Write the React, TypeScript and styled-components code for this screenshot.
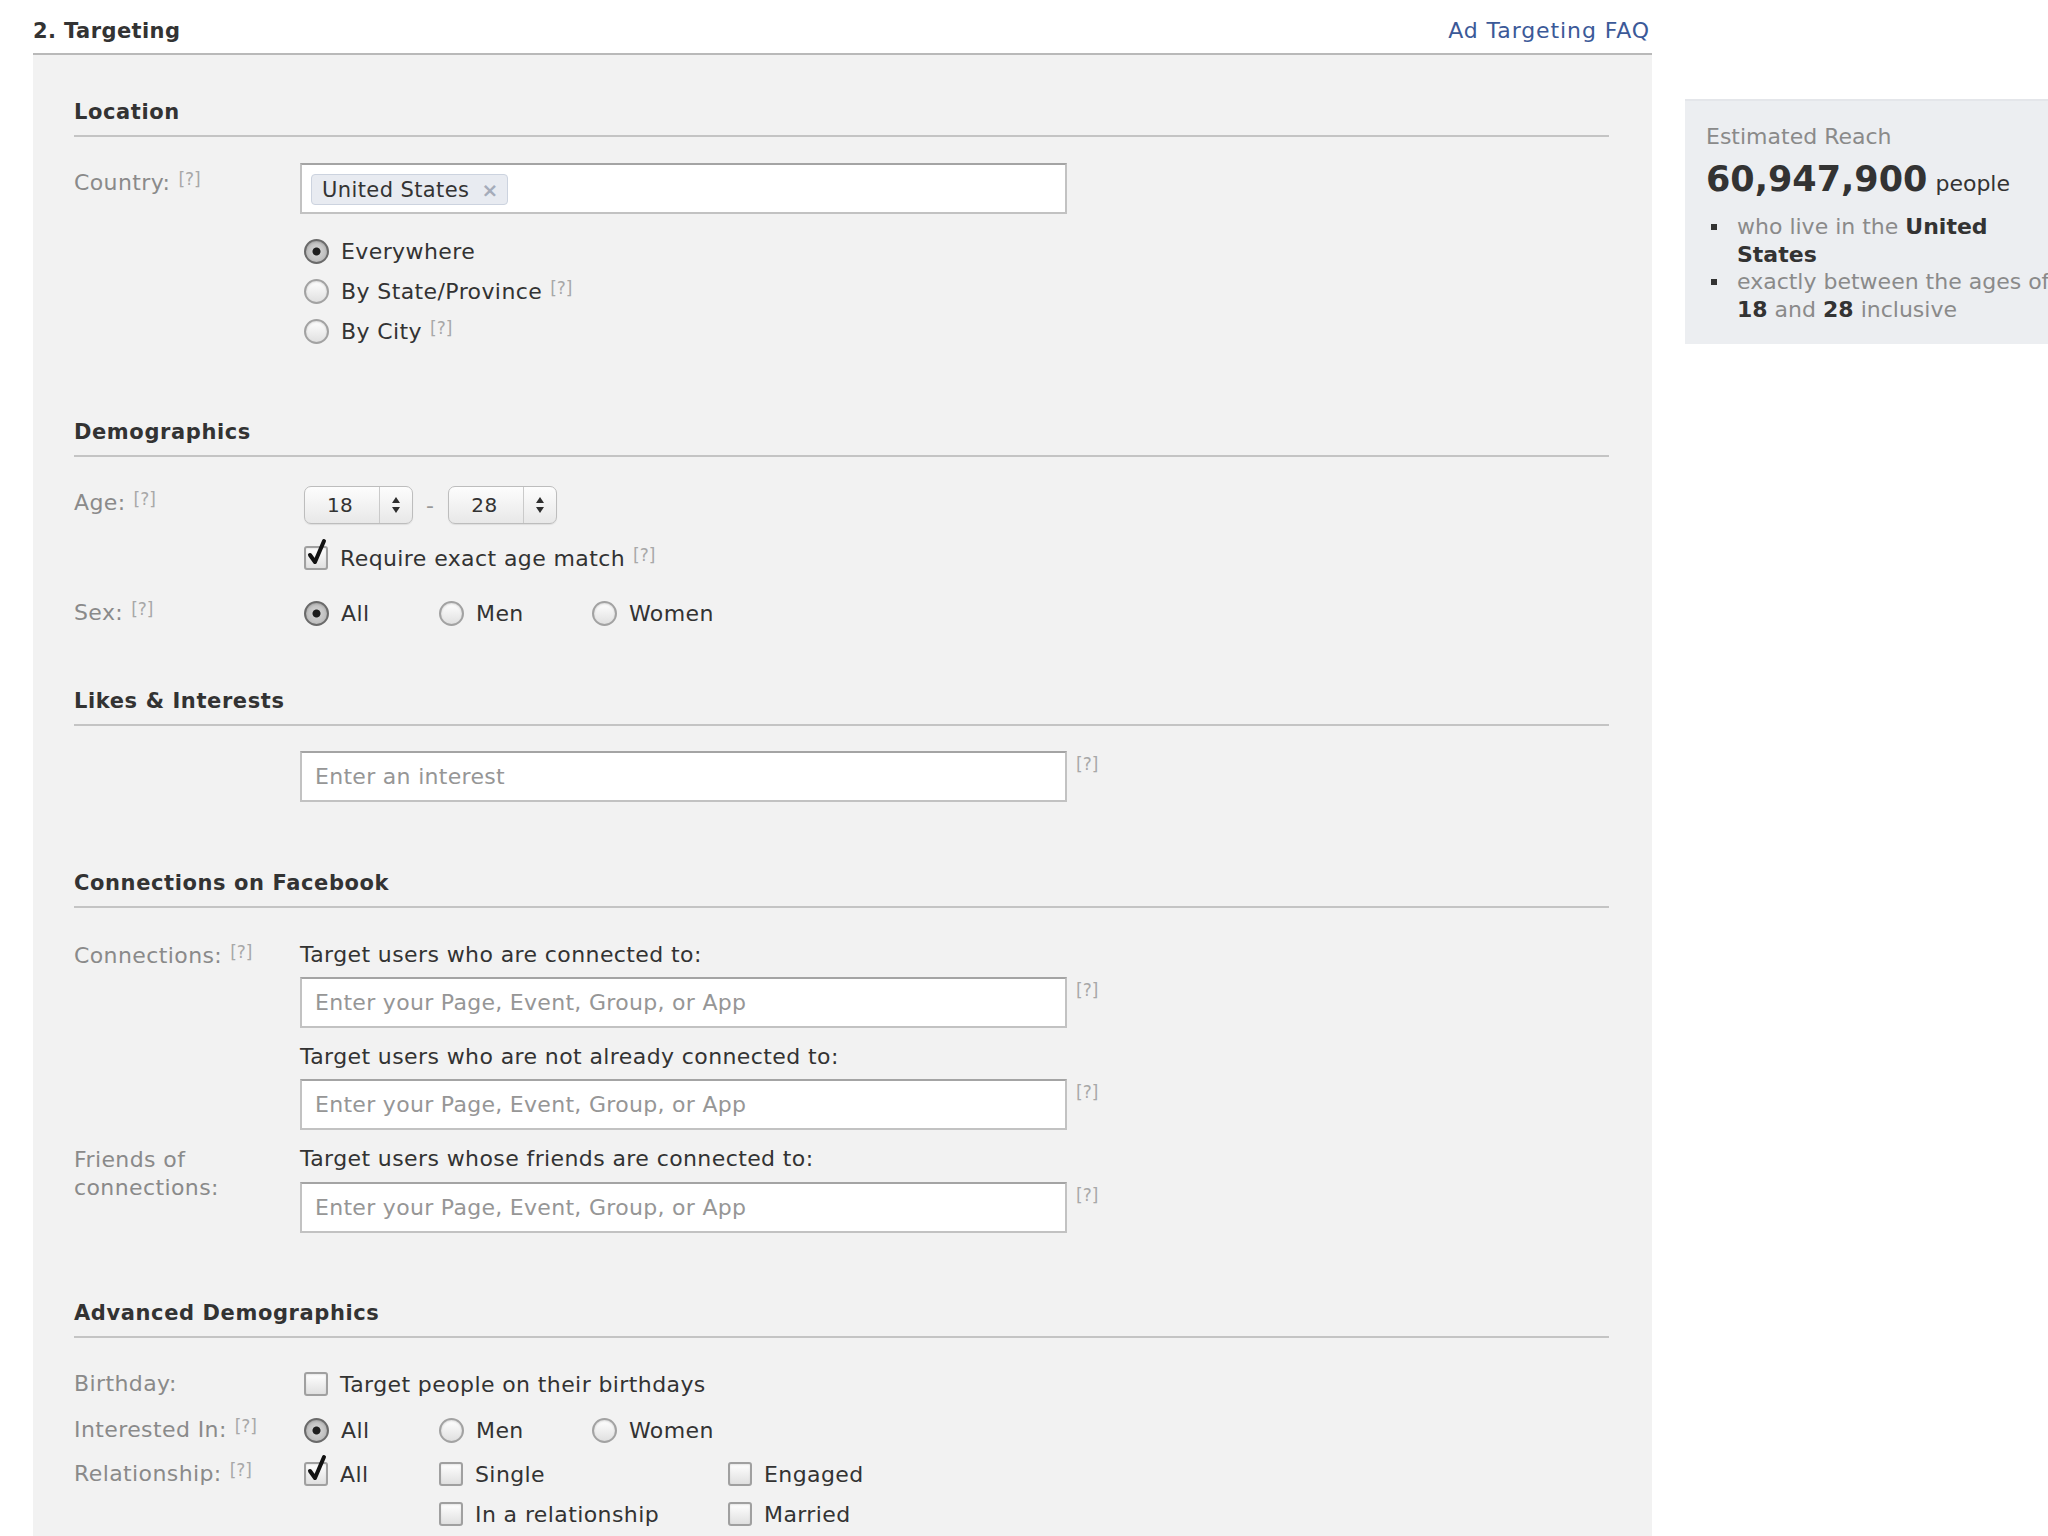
import React, { FC } from "react";
import styled, { createGlobalStyle } from "styled-components";

const GlobalStyle = createGlobalStyle`
  html, body {
    margin: 0;
    padding: 0;
    background: #ffffff;
    overflow: hidden;
  }
  body {
    font-family: "DejaVu Sans", Verdana, sans-serif;
    font-size: 22px;
    color: #333333;
  }
`;

const Page = styled.div`
  display: flex;
  align-items: flex-start;
  gap: 33px;
  padding-left: 33px;
  width: 2200px;
`;

const Main = styled.div`
  width: 1619px;
  flex-shrink: 0;
`;

const TitleBar = styled.div`
  display: flex;
  justify-content: space-between;
  align-items: center;
  height: 55px;
  box-sizing: border-box;
  padding-top: 8px;
  border-bottom: 2px solid #b9b9b9;
`;

const Title = styled.h2`
  margin: 0;
  font-size: 21px;
  font-weight: bold;
  letter-spacing: 0.4px;
  color: #333333;
`;

const FaqLink = styled.a`
  color: #3b5998;
  font-size: 22px;
  letter-spacing: 0.9px;
  text-decoration: none;
  padding-right: 2px;
`;

const Panel = styled.div`
  background: #f2f2f2;
  padding: 44px 43px 40px 41px;
  min-height: 1500px;
  letter-spacing: 0.4px;
`;

const Section = styled.section<{ $mt?: number }>`
  margin-top: ${(p) => p.$mt ?? 0}px;
`;

const SectionHeader = styled.h3`
  margin: 0;
  font-size: 21px;
  font-weight: bold;
  line-height: 26px;
  letter-spacing: 0.6px;
  color: #333333;
  padding-bottom: 10px;
  border-bottom: 2px solid #c4c4c4;
`;

const Row = styled.div<{ $mt?: number }>`
  display: grid;
  grid-template-columns: 226px 1fr;
  margin-top: ${(p) => p.$mt ?? 0}px;
`;

const Label = styled.div<{ $pt?: number }>`
  color: #8a8a8a;
  line-height: 28px;
  padding-top: ${(p) => p.$pt ?? 0}px;
`;

const Help = styled.span`
  position: relative;
  top: -5px;
  font-size: 17px;
  letter-spacing: 0;
  color: #a8a8a8;
  margin-left: 8px;
`;

const SideHelp = styled.span`
  font-size: 17px;
  letter-spacing: 0;
  color: #a8a8a8;
  margin-left: 9px;
  line-height: 26px;
`;

const Field = styled.div`
  display: flex;
  flex-direction: column;
`;

const InputLine = styled.div<{ $mt?: number }>`
  display: flex;
  align-items: flex-start;
  margin-top: ${(p) => p.$mt ?? 0}px;
`;

const TextBox = styled.input`
  width: 767px;
  height: 51px;
  box-sizing: border-box;
  border: 2px solid #c2c2c2;
  border-top-color: #a4a4a4;
  background: #ffffff;
  padding: 0 13px;
  font-family: inherit;
  font-size: 22px;
  letter-spacing: 0.3px;
  color: #333333;
  outline: none;
  &::placeholder {
    color: #969696;
  }
`;

const TokenBox = styled.div`
  width: 767px;
  height: 51px;
  box-sizing: border-box;
  border: 2px solid #c2c2c2;
  border-top-color: #a4a4a4;
  background: #ffffff;
  padding: 9px 0 0 9px;
`;

const Token = styled.span`
  display: inline-flex;
  align-items: center;
  gap: 12px;
  height: 31px;
  box-sizing: border-box;
  padding: 0 8px 0 10px;
  background: #e8ebf1;
  border: 1px solid #ccd3df;
  border-radius: 4px;
  font-size: 21px;
  color: #333333;
`;

const TokenClose = styled.span`
  color: #a5acba;
  font-size: 20px;
  font-weight: bold;
`;

const Caption = styled.div<{ $mt?: number }>`
  line-height: 26px;
  color: #333333;
  margin-top: ${(p) => p.$mt ?? 0}px;
`;

const OptionList = styled.div<{ $mt?: number }>`
  display: flex;
  flex-direction: column;
  margin-left: 4px;
  margin-top: ${(p) => p.$mt ?? 0}px;
`;

const OptionGrid = styled.div<{ $cols: string }>`
  display: grid;
  grid-template-columns: ${(p) => p.$cols};
  grid-auto-rows: 40px;
  margin-left: 4px;
`;

const OptionItem = styled.label<{ $col?: number; $row?: number }>`
  display: inline-flex;
  align-items: center;
  gap: 12px;
  height: 40px;
  color: #333333;
  grid-column: ${(p) => p.$col ?? "auto"};
  grid-row: ${(p) => p.$row ?? "auto"};
`;

const RadioDot = styled.span<{ $on?: boolean }>`
  width: 25px;
  height: 25px;
  flex-shrink: 0;
  box-sizing: border-box;
  border-radius: 50%;
  border: 2px solid ${(p) => (p.$on ? "#6a6a6a" : "#a2a2a2")};
  background: ${(p) =>
    p.$on
      ? "radial-gradient(circle, #1e1e1e 0 3.5px, #cdcdcd 4.5px, #b0b0b0 100%)"
      : "linear-gradient(#ffffff, #e0e0e0)"};
  box-shadow: inset 0 1px 2px rgba(0, 0, 0, 0.14);
`;

const CheckSquare = styled.span`
  position: relative;
  width: 24px;
  height: 24px;
  flex-shrink: 0;
  box-sizing: border-box;
  border-radius: 3px;
  border: 2px solid #a0a0a0;
  background: linear-gradient(#ffffff, #e0e0e0);
  box-shadow: inset 0 1px 2px rgba(0, 0, 0, 0.1);
`;

const CheckMark = styled.svg`
  position: absolute;
  left: 1px;
  top: -9px;
  overflow: visible;
`;

const AgeRange = styled.div`
  display: flex;
  align-items: center;
  height: 38px;
  margin-left: 4px;
`;

const Select = styled.div`
  display: inline-flex;
  width: 109px;
  height: 38px;
  box-sizing: border-box;
  border: 1px solid #bdbdbd;
  border-radius: 7px;
  background: linear-gradient(#fdfdfd, #e8e8e8);
  box-shadow: 0 1px 1px rgba(0, 0, 0, 0.08);
`;

const SelectValue = styled.span`
  flex: 1;
  padding-left: 22px;
  line-height: 36px;
  font-size: 20px;
  color: #333333;
  border-right: 1px solid #cacaca;
`;

const SelectArrows = styled.span`
  width: 32px;
  display: flex;
  align-items: center;
  justify-content: center;
`;

const RangeDash = styled.span`
  margin: 0 14px 0 13px;
  color: #999999;
`;

const Aside = styled.aside`
  flex-shrink: 0;
  width: 403px;
  box-sizing: border-box;
  margin-top: 99px;
  padding: 21px 21px 21px 21px;
  background: #eceef1;
  border-top: 2px solid #e4e6ea;
`;

const ReachTitle = styled.div`
  color: #8a8a8a;
  line-height: 30px;
`;

const ReachCount = styled.div`
  margin-top: 7px;
  line-height: 40px;
  color: #333333;
`;

const ReachNumber = styled.span`
  font-size: 35px;
  font-weight: bold;
  margin-right: 8px;
`;

const ReachList = styled.ul`
  list-style: none;
  margin: 9px 0 0 0;
  padding: 0;
`;

const ReachItem = styled.li`
  position: relative;
  padding-left: 31px;
  line-height: 27.5px;
  color: #8a8a8a;
  width: 330px;
  &::before {
    content: "";
    position: absolute;
    left: 5px;
    top: 11px;
    width: 6px;
    height: 6px;
    background: #333333;
  }
  b {
    color: #333333;
  }
`;

const Arrows: FC = () => (
  <svg width="10" height="18" viewBox="0 0 10 18">
    <path d="M5 1 L9 7 L1 7 Z" fill="#2e2e2e" />
    <path d="M5 17 L9 11 L1 11 Z" fill="#2e2e2e" />
  </svg>
);

const Radio: FC<{ on?: boolean; label: React.ReactNode; col?: number; row?: number }> = ({
  on,
  label,
  col,
  row,
}) => (
  <OptionItem $col={col} $row={row}>
    <RadioDot $on={on} />
    <span>{label}</span>
  </OptionItem>
);

const Check: FC<{ on?: boolean; label: React.ReactNode; col?: number; row?: number }> = ({
  on,
  label,
  col,
  row,
}) => (
  <OptionItem $col={col} $row={row}>
    <CheckSquare>
      {on && (
        <CheckMark width="20" height="27" viewBox="0 0 20 27">
          <path
            d="M3 16 L8 23 L17 2"
            fill="none"
            stroke="#111111"
            strokeWidth="4"
            strokeLinecap="round"
            strokeLinejoin="round"
          />
        </CheckMark>
      )}
    </CheckSquare>
    <span>{label}</span>
  </OptionItem>
);

const AgeSelect: FC<{ value: string }> = ({ value }) => (
  <Select>
    <SelectValue>{value}</SelectValue>
    <SelectArrows>
      <Arrows />
    </SelectArrows>
  </Select>
);

const ObjectInput: FC<{ mt?: number }> = ({ mt }) => (
  <InputLine $mt={mt}>
    <TextBox placeholder="Enter your Page, Event, Group, or App" />
    <SideHelp>[?]</SideHelp>
  </InputLine>
);

const App: FC = () => {
  return (
    <>
      <GlobalStyle />
      <Page>
        <Main>
          <TitleBar>
            <Title>2. Targeting</Title>
            <FaqLink href="#">Ad Targeting FAQ</FaqLink>
          </TitleBar>
          <Panel>
            <Section>
              <SectionHeader>Location</SectionHeader>
              <Row $mt={26}>
                <Label $pt={6}>
                  Country:<Help>[?]</Help>
                </Label>
                <Field>
                  <TokenBox>
                    <Token>
                      United States<TokenClose>×</TokenClose>
                    </Token>
                  </TokenBox>
                  <OptionList $mt={17}>
                    <Radio on label="Everywhere" />
                    <Radio
                      label={
                        <>
                          By State/Province<Help>[?]</Help>
                        </>
                      }
                    />
                    <Radio
                      label={
                        <>
                          By City<Help>[?]</Help>
                        </>
                      }
                    />
                  </OptionList>
                </Field>
              </Row>
            </Section>

            <Section $mt={68}>
              <SectionHeader>Demographics</SectionHeader>
              <Row $mt={29}>
                <Label $pt={3}>
                  Age:<Help>[?]</Help>
                </Label>
                <Field>
                  <AgeRange>
                    <AgeSelect value="18" />
                    <RangeDash>-</RangeDash>
                    <AgeSelect value="28" />
                  </AgeRange>
                  <OptionList $mt={14}>
                    <Check
                      on
                      label={
                        <>
                          Require exact age match<Help>[?]</Help>
                        </>
                      }
                    />
                  </OptionList>
                </Field>
              </Row>
              <Row $mt={15}>
                <Label $pt={6}>
                  Sex:<Help>[?]</Help>
                </Label>
                <OptionGrid $cols="135px 153px auto">
                  <Radio on label="All" />
                  <Radio label="Men" />
                  <Radio label="Women" />
                </OptionGrid>
              </Row>
            </Section>

            <Section $mt={55}>
              <SectionHeader>Likes &amp; Interests</SectionHeader>
              <Row $mt={25}>
                <Label />
                <InputLine>
                  <TextBox placeholder="Enter an interest" />
                  <SideHelp>[?]</SideHelp>
                </InputLine>
              </Row>
            </Section>

            <Section $mt={68}>
              <SectionHeader>Connections on Facebook</SectionHeader>
              <Row $mt={34}>
                <Label>
                  Connections:<Help>[?]</Help>
                </Label>
                <Field>
                  <Caption>Target users who are connected to:</Caption>
                  <ObjectInput mt={9} />
                  <Caption $mt={16}>Target users who are not already connected to:</Caption>
                  <ObjectInput mt={9} />
                </Field>
              </Row>
              <Row $mt={16}>
                <Label>
                  Friends of
                  <br />
                  connections:
                </Label>
                <Field>
                  <Caption>Target users whose friends are connected to:</Caption>
                  <ObjectInput mt={10} />
                </Field>
              </Row>
            </Section>

            <Section $mt={67}>
              <SectionHeader>Advanced Demographics</SectionHeader>
              <Row $mt={26}>
                <Label $pt={6}>Birthday:</Label>
                <OptionGrid $cols="auto">
                  <Check label="Target people on their birthdays" />
                </OptionGrid>
              </Row>
              <Row $mt={6}>
                <Label $pt={6}>
                  Interested In:<Help>[?]</Help>
                </Label>
                <OptionGrid $cols="135px 153px auto">
                  <Radio on label="All" />
                  <Radio label="Men" />
                  <Radio label="Women" />
                </OptionGrid>
              </Row>
              <Row $mt={4}>
                <Label $pt={6}>
                  Relationship:<Help>[?]</Help>
                </Label>
                <OptionGrid $cols="135px 289px auto">
                  <Check on label="All" col={1} row={1} />
                  <Check label="Single" col={2} row={1} />
                  <Check label="In a relationship" col={2} row={2} />
                  <Check label="Engaged" col={3} row={1} />
                  <Check label="Married" col={3} row={2} />
                </OptionGrid>
              </Row>
            </Section>
          </Panel>
        </Main>

        <Aside>
          <ReachTitle>Estimated Reach</ReachTitle>
          <ReachCount>
            <ReachNumber>60,947,900</ReachNumber>people
          </ReachCount>
          <ReachList>
            <ReachItem>
              who live in the <b>United</b> <b>States</b>
            </ReachItem>
            <ReachItem>
              exactly between the ages of <b>18</b> and <b>28</b> inclusive
            </ReachItem>
          </ReachList>
        </Aside>
      </Page>
    </>
  );
};

export default App;
